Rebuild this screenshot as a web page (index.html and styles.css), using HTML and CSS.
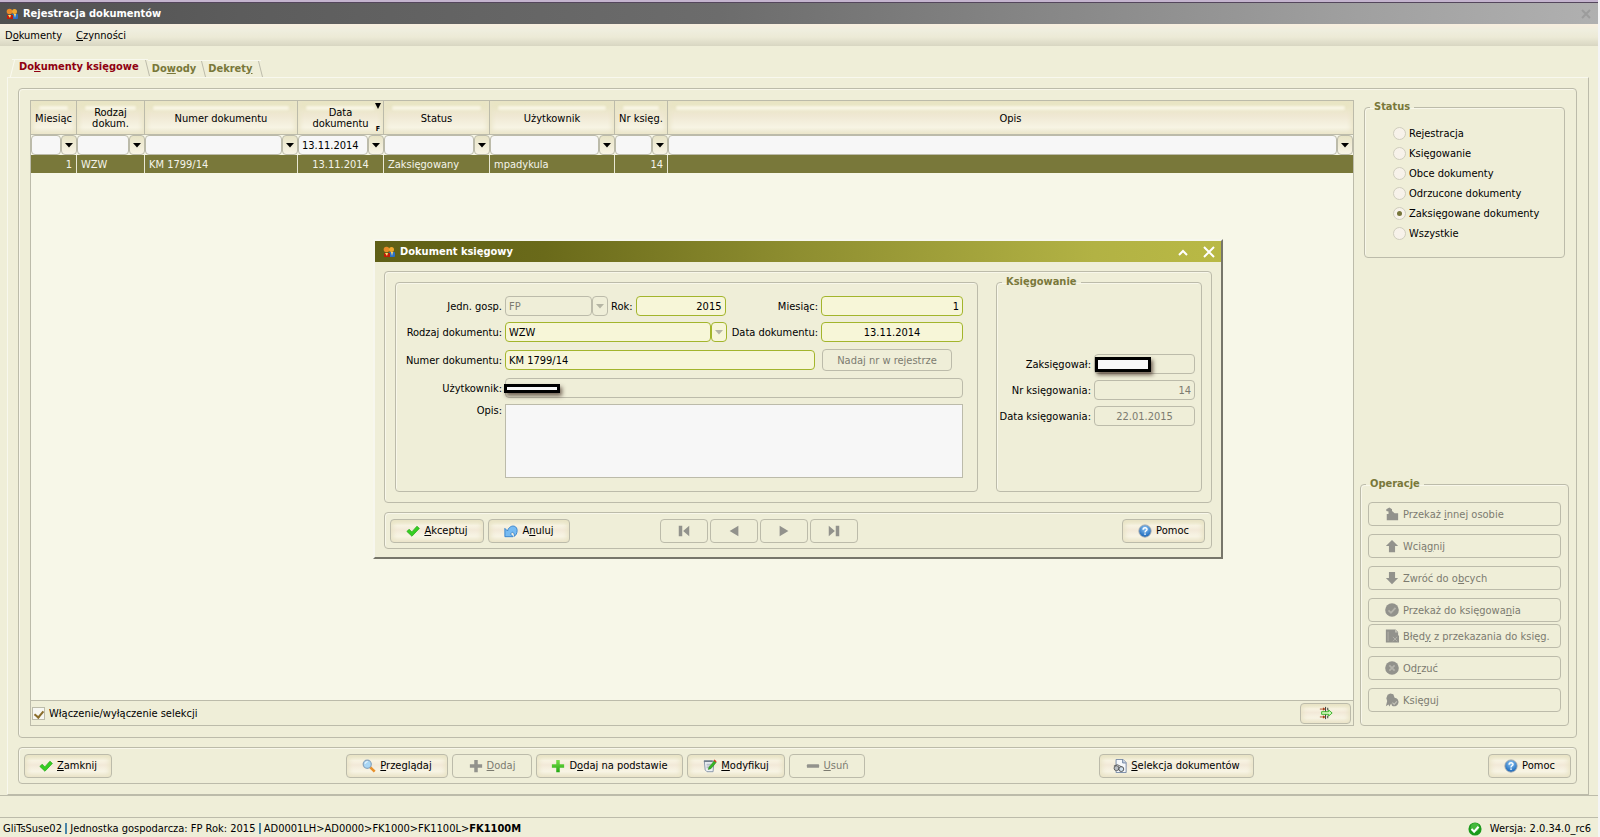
FILE: index.html
```html
<!DOCTYPE html>
<html lang="pl">
<head>
<meta charset="utf-8">
<title>Rejestracja dokumentów</title>
<link rel="stylesheet" href="styles.css">
</head>
<body>
<svg class="defs" width="0" height="0" aria-hidden="true">
  <defs>
    <radialGradient id="blue" cx="50%" cy="30%" r="70%"><stop offset="0" stop-color="#8fc6f4"/><stop offset="1" stop-color="#1463b8"/></radialGradient>
    <linearGradient id="green" x1="0" y1="0" x2="0" y2="1"><stop offset="0" stop-color="#7be04a"/><stop offset="1" stop-color="#22a812"/></linearGradient>
    <symbol id="people" viewBox="0 0 12 12"><rect x="6" y="6" width="6" height="5" rx="1" fill="#2a70c8"/><path d="M1 7h6v4H1z" fill="#c01c08"/><circle cx="3.500" cy="3.500" r="2.800" fill="#e88a28"/><circle cx="8.500" cy="3.500" r="2.500" fill="#f0a830"/><path d="M2 7l2 3 1-3zM8 6l1 4 1-4z" fill="#ffe070"/></symbol>
    <symbol id="check" viewBox="0 0 16 16"><path d="M1 8.500L3.500 6l3.200 3L12.500 2.500 15.300 5 6.800 14z" fill="#35cf22" stroke="#22a516" stroke-width=".8"/></symbol>
    <symbol id="lens" viewBox="0 0 16 16"><path d="M9 9l5.500 5.500" stroke="#e8912c" stroke-width="3"/><circle cx="6" cy="6" r="4.600" fill="#a9d6f5" stroke="#8aa4bd" stroke-width="1.400"/><path d="M3.500 5.500a3 3 0 0 1 3-2.500" stroke="#fff" fill="none"/></symbol>
    <symbol id="plus" viewBox="0 0 16 16"><path d="M6 1h4v5h5v4h-5v5H6v-5H1V6h5z"/></symbol>
    <symbol id="minus" viewBox="0 0 16 16"><rect x="1" y="6" width="14" height="4" rx="1"/></symbol>
    <symbol id="edit" viewBox="0 0 16 16"><path d="M1.500 2.500h11l-1 12h-7l-2-2z" fill="#eef1f5" stroke="#7f8fa2"/><path d="M1 1.500h10v2H1z" fill="#6f7c8c"/><path d="M4 6h5M4 8h4M4 10h3" stroke="#9aa6b5"/><path d="M6 12l1-3 6-7 2 2-6 7z" fill="#38b524" stroke="#1c7d14" stroke-width=".6"/><path d="M12 1.500l1-1 2.500 2-1 1.500z" fill="#d8381e"/></symbol>
    <symbol id="undo" viewBox="0 0 16 16"><path d="M1 5v9.500h9.500L7.500 11.500C9 8.500 11.500 8.500 12 14c1.500-1 3-3.500 3-6.500C15 .5 6 .5 4 8z" fill="#77bbf2" stroke="#2f7ec9" stroke-width="1"/></symbol>
    <symbol id="help" viewBox="0 0 16 16"><circle cx="8" cy="8" r="7" fill="url(#blue)" stroke="#9aa4ad"/><path d="M5.800 6.500C5.800 3.500 10.500 3.700 10.300 6.300 10.200 7.800 8 7.800 8 9.600" fill="none" stroke="#fff" stroke-width="1.600"/><rect x="7.200" y="10.800" width="1.700" height="1.600" fill="#fff"/></symbol>
    <symbol id="docfind" viewBox="0 0 16 16"><path d="M3.500.5h8l3.500 3.500v11.500H3.500z" fill="#f6f8fb" stroke="#6a7f9f"/><path d="M11 .5V4.500h4" fill="#c9d4e3" stroke="#6a7f9f"/><circle cx="4" cy="10.500" r="2.800" fill="#b9bec4" stroke="#555"/><circle cx="9.500" cy="11.500" r="2.800" fill="#cfe0ee" stroke="#444"/><path d="M1 8l4-1.500L10 9" stroke="#555" fill="none"/></symbol>
    <symbol id="hand" viewBox="0 0 16 16"><path d="M1.500 2.500L5 .5l3 2v2l3 2.500h4v8H2V8h2V5L1.500 4.500z"/></symbol>
    <symbol id="up" viewBox="0 0 16 16"><path d="M8 1l7 7h-3.500v7h-7V8H1z"/></symbol>
    <symbol id="down" viewBox="0 0 16 16"><path d="M8 15L1 8h3.500V1h7v7H15z"/></symbol>
    <symbol id="okgray" viewBox="0 0 16 16"><circle cx="8" cy="8" r="7.800"/><path d="M4 8.500l2.800 2.700L12 5.500" fill="none" stroke="#b5b4ac" stroke-width="2"/></symbol>
    <symbol id="docx" viewBox="0 0 16 16"><path d="M1 .5h11l3 3v4h1v8H1z"/><path d="M3.500 3v11M9 9l5 5M14 9l-5 5" stroke="#b5b4ac" fill="none"/><path d="M11.500.5V4H15" fill="#c4c3b8"/></symbol>
    <symbol id="xgray" viewBox="0 0 16 16"><circle cx="8" cy="8" r="7.800"/><path d="M5 5l6 6M11 5l-6 6" stroke="#b5b4ac" stroke-width="2"/></symbol>
    <symbol id="seal" viewBox="0 0 16 16"><path d="M3 2l3-1.500L9.500 1.500l1.500 4 2 .5a4.900 4.900 0 1 1-5 8.500L7 12l-2 3.500-1-2.500-3 2L2.500 9 1.500 6z"/><path d="M8.500 11l2 2 3-3.500" fill="none" stroke="#c4c3b8" stroke-width="1.300"/></symbol>
    <symbol id="first" viewBox="0 0 16 16"><path d="M2 2h4v12H2zM14 2v12L7 8z"/></symbol>
    <symbol id="prev" viewBox="0 0 16 16"><path d="M13 2v12L3 8z"/></symbol>
    <symbol id="next" viewBox="0 0 16 16"><path d="M3 2v12l10-6z"/></symbol>
    <symbol id="last" viewBox="0 0 16 16"><path d="M10 2h4v12h-4zM2 2v12l7-6z"/></symbol>
    <symbol id="filter" viewBox="0 0 16 16"><path d="M1 3.500h6M1 12.500h6" stroke="#a8421c"/><path d="M4.500 1.500l2.500 2-2.500 2zM4.500 10.500l2.500 2-2.500 2z" fill="#a8421c"/><path d="M7.500 1v14M10 2v3M10 11v3" stroke="#222"/><path d="M3 6.500h8V4.500L15 8l-4 3.500v-2H3z" fill="#d8f8c0" stroke="#28b01c"/></symbol>
    <symbol id="okgreen" viewBox="0 0 16 16"><circle cx="8" cy="8" r="7.500" fill="#1c9a1c"/><circle cx="8" cy="6" r="5" fill="#45b83c"/><path d="M4 8l3 3 5-5.500" fill="none" stroke="#fff" stroke-width="2.400"/></symbol>
    <symbol id="drop" viewBox="0 0 8 5"><path d="M0 0h8L4 4.500z"/></symbol>
  </defs>
</svg>

<header class="titlebar">
  <svg class="app-icon"><use href="#people"/></svg>
  <h1>Rejestracja dokumentów</h1>
  <svg class="close-dim" viewBox="0 0 12 12"><path d="M2 2l8 8M10 2l-8 8"/></svg>
</header>
<nav class="menubar">
  <a href="#">D<u>o</u>kumenty</a>
  <a href="#"><u>C</u>zynności</a>
</nav>

<main class="workspace">
  <div class="tabs" role="tablist">
    <button class="tab active" role="tab">Do<u>k</u>umenty księgowe</button>
    <button class="tab" role="tab">Do<u>w</u>ody</button>
    <button class="tab" role="tab">Dekret<u>y</u></button>
  </div>
  <div class="pane">
    <section class="panel content">
      <div class="grid">
        <table>
          <colgroup><col class="c-month"><col class="c-kind"><col class="c-number"><col class="c-date"><col class="c-status"><col class="c-user"><col class="c-nr"><col></colgroup>
          <thead>
            <tr class="heads">
              <th>Miesiąc</th><th>Rodzaj dokum.</th><th>Numer dokumentu</th>
              <th class="sorted">Data dokumentu<svg class="sort" viewBox="0 0 6 6"><path d="M0 0h6L3 6z"/></svg><small>F</small></th>
              <th>Status</th><th>Użytkownik</th><th>Nr księg.</th><th>Opis</th>
            </tr>
            <tr class="filters">
              <td><div class="combo"><select aria-label="Filtr: miesiąc"><option></option></select><span class="arrow"><svg><use href="#drop"/></svg></span></div></td>
              <td><div class="combo"><select aria-label="Filtr: rodzaj"><option></option></select><span class="arrow"><svg><use href="#drop"/></svg></span></div></td>
              <td><div class="combo"><select aria-label="Filtr: numer"><option></option></select><span class="arrow"><svg><use href="#drop"/></svg></span></div></td>
              <td><div class="combo"><select aria-label="Filtr: data"><option>13.11.2014</option></select><span class="arrow"><svg><use href="#drop"/></svg></span></div></td>
              <td><div class="combo"><select aria-label="Filtr: status"><option></option></select><span class="arrow"><svg><use href="#drop"/></svg></span></div></td>
              <td><div class="combo"><select aria-label="Filtr: użytkownik"><option></option></select><span class="arrow"><svg><use href="#drop"/></svg></span></div></td>
              <td><div class="combo"><select aria-label="Filtr: nr księg."><option></option></select><span class="arrow"><svg><use href="#drop"/></svg></span></div></td>
              <td><div class="combo"><select aria-label="Filtr: opis"><option></option></select><span class="arrow"><svg><use href="#drop"/></svg></span></div></td>
            </tr>
          </thead>
          <tbody>
            <tr class="selected"><td class="right">1</td><td>WZW</td><td>KM 1799/14</td><td class="center">13.11.2014</td><td>Zaksięgowany</td><td>mpadykula</td><td class="right">14</td><td></td></tr>
          </tbody>
        </table>
        <div class="grid-foot">
          <label class="check"><input type="checkbox" checked>Włączenie/wyłączenie selekcji</label>
          <button class="btn small" aria-label="Filtr"><svg class="icon"><use href="#filter"/></svg></button>
        </div>
      </div>
      <aside class="side">
        <fieldset class="status">
          <legend>Status</legend>
          <label><input type="radio" name="st">Rejestracja</label>
          <label><input type="radio" name="st">Księgowanie</label>
          <label><input type="radio" name="st">Obce dokumenty</label>
          <label><input type="radio" name="st">Odrzucone dokumenty</label>
          <label><input type="radio" name="st" checked>Zaksięgowane dokumenty</label>
          <label><input type="radio" name="st">Wszystkie</label>
        </fieldset>
        <fieldset class="operations">
          <legend>Operacje</legend>
          <button class="btn" disabled><svg class="icon"><use href="#hand"/></svg><span>Przekaż <u>i</u>nnej osobie</span></button>
          <button class="btn" disabled><svg class="icon"><use href="#up"/></svg><span>Wcią<u>g</u>nij</span></button>
          <button class="btn" disabled><svg class="icon"><use href="#down"/></svg><span>Zwróć do o<u>b</u>cych</span></button>
          <button class="btn" disabled><svg class="icon"><use href="#okgray"/></svg><span>Przekaż do księgowa<u>n</u>ia</span></button>
          <button class="btn tight" disabled><svg class="icon"><use href="#docx"/></svg><span>Błęd<u>y</u> z przekazania do księg.</span></button>
          <button class="btn" disabled><svg class="icon"><use href="#xgray"/></svg><span>Od<u>r</u>zuć</span></button>
          <button class="btn" disabled><svg class="icon"><use href="#seal"/></svg><span>Księgu<u>j</u></span></button>
        </fieldset>
      </aside>
    </section>
    <section class="panel actions">
      <button class="btn w-close"><svg class="icon"><use href="#check"/></svg><span><u>Z</u>amknij</span></button>
      <div class="group">
        <button class="btn w-view"><svg class="icon"><use href="#lens"/></svg><span><u>P</u>rzeglądaj</span></button>
        <button class="btn w-add" disabled><svg class="icon"><use href="#plus"/></svg><span><u>D</u>odaj</span></button>
        <button class="btn w-addfrom"><svg class="icon" fill="url(#green)"><use href="#plus"/></svg><span>D<u>o</u>daj na podstawie</span></button>
        <button class="btn w-edit"><svg class="icon"><use href="#edit"/></svg><span><u>M</u>odyfikuj</span></button>
        <button class="btn w-del" disabled><svg class="icon"><use href="#minus"/></svg><span><u>U</u>suń</span></button>
      </div>
      <button class="btn w-select"><svg class="icon"><use href="#docfind"/></svg><span><u>S</u>elekcja dokumentów</span></button>
      <button class="btn w-help"><svg class="icon"><use href="#help"/></svg><span>Pomoc</span></button>
    </section>
  </div>
</main>

<footer class="statusbar">
  <span>GliTsSuse02 <i></i> Jednostka gospodarcza: FP Rok: 2015 <i></i> AD0001LH&gt;AD0000&gt;FK1000&gt;FK1100L&gt;<b>FK1100M</b></span>
  <span class="version"><svg class="icon"><use href="#okgreen"/></svg>Wersja: 2.0.34.0_rc6</span>
</footer>

<div class="dialog" role="dialog" aria-labelledby="dlg-title">
  <header class="dialog-title">
    <svg class="app-icon"><use href="#people"/></svg>
    <h2 id="dlg-title">Dokument księgowy</h2>
    <button aria-label="Zwiń"><svg viewBox="0 0 12 12"><path d="M2 9l4-4 4 4"/></svg></button>
    <button aria-label="Zamknij"><svg viewBox="0 0 12 12"><path d="M1 1l10 10M11 1L1 11"/></svg></button>
  </header>
  <section class="panel form">
    <div class="panel fields">
      <div class="row">
        <label class="lead" for="unit">Jedn. gosp.</label>
        <div class="combo off w-unit"><select id="unit" disabled><option>FP</option></select><span class="arrow"><svg><use href="#drop"/></svg></span></div>
        <label class="push" for="year">Rok:</label><input id="year" class="field req right w-year" value="2015">
        <label class="push" for="month">Miesiąc:</label><input id="month" class="field req right w-month" value="1">
      </div>
      <div class="row">
        <label class="lead" for="kind">Rodzaj dokumentu:</label>
        <div class="combo req w-kind"><select id="kind"><option>WZW</option></select><span class="arrow"><svg><use href="#drop"/></svg></span></div>
        <label class="push" for="date">Data dokumentu:</label><input id="date" class="field req center w-month" value="13.11.2014">
      </div>
      <div class="row spaced">
        <label class="lead" for="number">Numer dokumentu:</label><input id="number" class="field req w-number" value="KM 1799/14">
        <button class="btn w-assign" disabled>Nadaj nr w rejestrze</button>
      </div>
      <div class="row spaced">
        <label class="lead" for="user">Użytkownik:</label>
        <div class="masked grow"><input id="user" class="field" disabled><span class="mask thin"></span></div>
      </div>
      <div class="row top">
        <label class="lead" for="desc">Opis:</label><textarea id="desc"></textarea>
      </div>
    </div>
    <fieldset class="booking">
      <legend>Księgowanie</legend>
      <div class="row"><label for="by">Zaksięgował:</label><div class="masked w-book"><input id="by" class="field" disabled><span class="mask"></span></div></div>
      <div class="row"><label for="bnr">Nr księgowania:</label><input id="bnr" class="field right w-book" value="14" disabled></div>
      <div class="row"><label for="bdate">Data księgowania:</label><input id="bdate" class="field center w-book" value="22.01.2015" disabled></div>
    </fieldset>
  </section>
  <section class="panel dialog-actions">
    <button class="btn w-accept"><svg class="icon"><use href="#check"/></svg><span><u>A</u>kceptuj</span></button>
    <button class="btn w-cancel"><svg class="icon"><use href="#undo"/></svg><span>A<u>n</u>uluj</span></button>
    <div class="group">
      <button class="btn w-nav" disabled aria-label="Pierwszy"><svg class="icon"><use href="#first"/></svg></button>
      <button class="btn w-nav" disabled aria-label="Poprzedni"><svg class="icon"><use href="#prev"/></svg></button>
      <button class="btn w-nav" disabled aria-label="Następny"><svg class="icon"><use href="#next"/></svg></button>
      <button class="btn w-nav" disabled aria-label="Ostatni"><svg class="icon"><use href="#last"/></svg></button>
    </div>
    <button class="btn w-help"><svg class="icon"><use href="#help"/></svg><span>Pomoc</span></button>
  </section>
</div>
</body>
</html>
```

FILE: styles.css
```css
:root {
  --bg: #efeed8;
  --line: #bcbbaa;
  --olive: #79783a;
  --lime: #a3b52c;
  --ui: Tahoma, "DejaVu Sans Condensed", "DejaVu Sans", sans-serif;
}
* { box-sizing: border-box; }
body {
  margin: 0; min-height: 100vh; display: flex; flex-direction: column;
  background: var(--bg); color: #000; font: 11px/13px var(--ui);
  border-right: 2px solid #f4f4f6;
}
button, input, select, textarea { font: inherit; color: inherit; margin: 0; }
.defs { position: absolute; }
h1, h2 { margin: 0; font: bold 11px/14px var(--ui); color: #fff; }
u { text-underline-offset: 1px; }

.titlebar {
  display: flex; align-items: center; gap: 5px; height: 24px; padding: 2px 6px 0 6px;
  background: linear-gradient(90deg, #505050, #5c5c5c 15%, #6c6c6c 45%, #a0a0a0 85%, #b0b0b0);
  border-top: 2px solid #c4b4ce; box-shadow: inset 0 1px #54465c;
}
.titlebar h1 { flex: 1; }
.app-icon { width: 12px; height: 12px; }
.close-dim { width: 12px; height: 12px; fill: none; stroke: #9c9c9c; stroke-width: 2; }

.menubar {
  display: flex; gap: 14px; height: 22px; padding: 5px; line-height: 13px;
  background: linear-gradient(#f8eede, #efeede 30%, #ecead6 60%, #d8d6c2);
}
.menubar a { color: #000; text-decoration: none; }

.workspace { flex: 1; display: flex; flex-direction: column; padding: 13px 9px 0 7px; }
.tabs { display: flex; align-items: flex-end; height: 18px; padding-left: 5px; }
.tab {
  position: relative; height: 17px; padding: 0 8px 2px 4px; border: 0; border-top: 1px solid #f8f8ee;
  background: none; color: var(--olive); font-weight: bold;
}
.tab::after {
  content: ""; position: absolute; right: 0; top: 0; width: 4px; height: 16px;
  border-right: 1px solid var(--line); transform: skewX(14deg);
}
.tab.active { height: 18px; padding: 0 9px 4px 7px; color: #900010; }
.tab.active::before {
  content: ""; position: absolute; left: 0; top: 0; width: 4px; height: 17px;
  border-left: 1px solid #fafaf0; transform: skewX(-14deg);
}
.pane {
  flex: 1; display: flex; flex-direction: column; gap: 9px; padding: 10px 11px 10px 10px;
  border: 1px solid; border-color: #f8f8ee var(--line) var(--line) #f8f8ee;
}
.panel, fieldset {
  margin: 0; min-width: 0; border: 1px solid var(--line); border-radius: 4px;
  box-shadow: inset 1px 1px #f8f7ea;
}
.content { flex: 1; display: flex; gap: 6px; padding: 11px 7px 11px 11px; }

.grid { flex: 1; min-width: 0; display: flex; flex-direction: column; border: 1px solid var(--line); background: #f7f7e8; }
table { width: 100%; border-collapse: separate; border-spacing: 0; table-layout: fixed; }
.c-month { width: 46px; } .c-kind { width: 68px; } .c-number { width: 153px; } .c-date { width: 86px; }
.c-status { width: 106px; } .c-user { width: 125px; } .c-nr { width: 53px; }
th {
  position: relative; z-index: 0; height: 34px; padding: 1px 4px 0; font-weight: normal; line-height: 11px; vertical-align: middle;
  border-right: 1px solid var(--line); border-bottom: 1px solid var(--line);
  background: linear-gradient(#e6e4bd, #efe8d3 45%, #f7f4e4 80%, #efebd6);
  box-shadow: inset 0 0 5px 2px #eae5c8;
}
th::before {
  content: ""; position: absolute; z-index: -1; left: 8px; right: 8px; top: 5px; height: 4px;
  background: #f8f5e4; border-radius: 3px; filter: blur(1px);
}
th:last-child, .filters td:last-child { border-right: 0; }
.sort { position: absolute; right: 2px; top: 2px; width: 6px; height: 6px; }
th small { position: absolute; right: 3px; bottom: 1px; font: bold 7px/8px var(--ui); }
.filters td { padding: 0; height: 20px; }
.selected td {
  height: 18px; padding: 0 4px; background: var(--olive); color: #f4f4ea; line-height: 15px;
  border-right: 1px solid #e9e8d4;
}
.selected td:last-child { border-right: 0; }
.right { text-align: right; }
.center { text-align: center; }

.combo { display: flex; height: 20px; }
.combo select {
  appearance: none; flex: 1; min-width: 0; height: 100%; padding: 0 3px; background: #f7f7f7;
  border: 1px solid var(--line); border-radius: 4px; outline: 0;
}
.combo .arrow {
  flex: none; width: 16px; display: flex; align-items: center; justify-content: center;
  border: 1px solid var(--line); border-radius: 4px; background: linear-gradient(#e8e4c6, #f8f4e6);
}
.arrow svg { width: 8px; height: 5px; }
.combo.req select, .combo.req .arrow { background: #f7f6d8; border-color: var(--lime); }
.combo.off select, .combo.off .arrow { background: transparent; opacity: 1; color: #7c7b70; }
.combo.req svg, .combo.off svg { fill: #b5b5a4; }

.grid-foot {
  display: flex; align-items: center; justify-content: space-between; height: 25px; margin-top: auto; padding: 0 2px 0 1px;
  border-top: 1px solid var(--line); background: var(--bg);
}
.check { display: flex; align-items: center; gap: 4px; }
.check input {
  appearance: none; width: 13px; height: 13px; border: 1px solid var(--line); background: #f7f7f2;
  display: grid; place-items: center;
}
.check input:checked::before {
  content: ""; width: 4px; height: 7px; border: solid #8a6d2c; border-width: 0 2px 2px 0; transform: rotate(40deg);
}

.btn {
  display: inline-flex; align-items: center; justify-content: center; gap: 4px; height: 24px; padding: 0 4px; white-space: nowrap;
  border: 1px solid var(--line); border-radius: 4px;
  background: linear-gradient(#e8e4c4, #f8f4e4 25%, #f2e9d8 45%, #f8f5e6 75%, #f2ead8);
  box-shadow: inset 0 0 5px 2px #e9e4c6;
}
.btn:disabled { background: none; box-shadow: none; color: #7c7b70; fill: #92928c; }
.btn.small { width: 51px; height: 21px; }
.icon { width: 14px; height: 14px; flex: none; }

.side { flex: none; width: 209px; display: flex; flex-direction: column; }
legend { padding: 0 4px; color: var(--olive); font: bold 11px/14px var(--ui); }
.status { margin: 0 4px; height: 158px; padding: 9px 0 0 28px; display: flex; flex-direction: column; }
.status label { display: flex; align-items: center; gap: 3px; height: 20px; white-space: nowrap; }
.status legend { margin-left: -23px; }
.status input {
  appearance: none; width: 13px; height: 13px; border: 1px solid #cfcdbd; border-radius: 50%;
  background: #f7f2ea; display: grid; place-items: center;
}
.status input:checked::before { content: ""; width: 5px; height: 5px; border-radius: 50%; background: #76753a; }
.operations { margin-top: auto; padding: 11px 7px 13px; display: flex; flex-direction: column; gap: 8px; }
.operations legend { margin-left: -2px; }
.operations .btn { width: 100%; justify-content: flex-start; padding-left: 16px; }
.operations .tight { margin-top: -6px; }

.actions { display: flex; align-items: center; height: 37px; padding: 0 5px; }
.group { display: flex; }
.actions .group { gap: 4px; margin-left: 234px; }
.w-close { width: 88px; } .w-view { width: 102px; } .w-add { width: 80px; } .w-addfrom { width: 147px; }
.w-edit { width: 98px; } .w-del { width: 76px; } .w-select { width: 155px; margin-left: auto; margin-right: 234px; } .w-help { width: 83px; }

.statusbar {
  display: flex; align-items: center; justify-content: space-between; height: 42px; padding: 24px 7px 0 3px; line-height: 17px;
  background: linear-gradient(var(--line), var(--line)) 0 21px / 100% 1px no-repeat;
  border-top: 1px solid var(--line);
}
.statusbar i { display: inline-block; width: 2px; height: 11px; background: #4a86a8; vertical-align: -2px; }
.version { display: flex; align-items: center; gap: 8px; }

.dialog {
  position: absolute; left: 373px; top: 239px; width: 850px;
  background: var(--bg); border: 2px solid; border-color: #f7f7ee #77766a #77766a #f7f7ee;
}
.dialog-title {
  display: flex; align-items: center; height: 21px; padding: 0 6px 0 8px;
  background: linear-gradient(90deg, #5f5f16, #6a6a1a 20%, #8e8e30 50%, #b2b244 85%, #b9b945);
}
.dialog-title h2 { flex: 1; margin-left: 5px; }
.dialog-title button { display: flex; width: 12px; height: 12px; margin-left: 14px; padding: 0; border: 0; background: none; }
.dialog-title button svg { width: 12px; height: 12px; fill: none; stroke: #fff; stroke-width: 2; }
.form { display: flex; gap: 18px; margin: 9px 9px 0; padding: 10px 9px 10px 10px; }
.fields { flex: 1; padding: 13px 14px 12px 3px; }
.row { display: flex; align-items: center; gap: 3px; height: 20px; margin-bottom: 6px; white-space: nowrap; }
.row.spaced { margin-top: 8px; }
.row.top { height: 74px; margin-bottom: 0; align-items: flex-start; }
.lead { flex: none; width: 103px; text-align: right; }
.push { margin-left: auto; }
.field {
  height: 20px; width: 100%; min-width: 0; padding: 0 3px; background: transparent; color: #000;
  border: 1px solid var(--line); border-radius: 4px;
}
.field:disabled { color: #7c7b70; }
.field.req { background: #f7f6d8; border-color: var(--lime); }
.row .w-unit { flex: none; width: 103px; } .row .w-year { flex: none; width: 90px; }
.row .w-month { flex: none; width: 142px; } .row .w-kind { flex: none; width: 222px; }
.row .w-unit + .push { margin-left: 0; }
.w-number { width: 310px; } .w-assign { width: 130px; height: 22px; margin-left: 4px; }
.grow { flex: 1; }
.row .w-book { flex: none; width: 101px; }
.masked { position: relative; }
.mask {
  position: absolute; left: 1px; top: 3px; width: 56px; height: 15px; background: #f8f8f8; border: 3px solid #000;
  box-shadow: 2px 3px 4px rgba(60, 40, 30, .7);
}
.mask.thin { left: -1px; top: 6px; height: 9px; }
textarea { flex: 1; height: 74px; resize: none; border: 1px solid var(--line); background: #f7f7f7; }
.booking { flex: none; width: 206px; height: 217px; margin-top: -7px; padding: 65px 6px 0 2px; }
.booking legend { margin-left: 3px; }
.booking .row { justify-content: flex-end; }
.dialog-actions { display: flex; align-items: center; gap: 4px; height: 37px; margin: 9px 9px 8px; padding: 0 6px 0 5px; }
.dialog-actions .group { gap: 2px; margin: 0 auto 0 86px; }
.w-accept { width: 94px; } .w-cancel { width: 82px; } .w-nav { width: 48px; }
```
